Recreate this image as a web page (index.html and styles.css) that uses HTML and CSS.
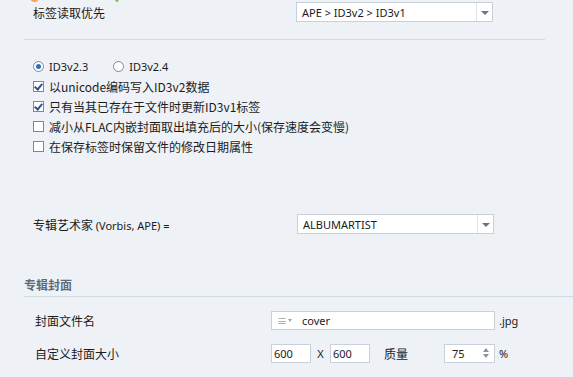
FILE: index.html
```html
<!DOCTYPE html>
<html lang="zh">
<head>
    <meta charset="UTF-8">
    <title>标签设置</title>
    <link rel="stylesheet" href="styles.css">
</head>
<body>
<div class="page">
    <div class="cut">
        <span class="dot orange"></span>
        <span class="dot green"></span>
    </div>

    <div class="row first">
        <span class="label">标签读取优先</span>
        <div class="combo"><span class="value">APE &gt; ID3v2 &gt; ID3v1</span><span class="arrow"></span></div>
    </div>

    <div class="sep"></div>

    <div class="options">
        <div class="radios">
            <span class="opt"><span class="radio on"></span>ID3v2.3</span>
            <span class="opt"><span class="radio"></span>ID3v2.4</span>
        </div>
        <div class="opt"><span class="check on"></span>以unicode编码写入ID3v2数据</div>
        <div class="opt"><span class="check on"></span>只有当其已存在于文件时更新ID3v1标签</div>
        <div class="opt"><span class="check"></span>减小从FLAC内嵌封面取出填充后的大小(保存速度会变慢)</div>
        <div class="opt"><span class="check"></span>在保存标签时保留文件的修改日期属性</div>
    </div>

    <div class="row artist">
        <span class="label">专辑艺术家 <span class="latin">(Vorbis, APE) =</span></span>
        <div class="combo"><span class="value">ALBUMARTIST</span><span class="arrow"></span></div>
    </div>

    <div class="section">专辑封面</div>

    <div class="row cover">
        <span class="label wide">封面文件名</span>
        <div class="input name"><span class="menu">≡<span class="tri"></span></span>cover</div>
        <span class="suffix">.jpg</span>
    </div>

    <div class="row cover">
        <span class="label wide">自定义封面大小</span>
        <div class="input small">600</div>
        <span class="x">X</span>
        <div class="input small">600</div>
        <span class="quality">质量</span>
        <div class="input spin">75<span class="spinner"><span class="up"></span><span class="down"></span></span></div>
        <span class="suffix">%</span>
    </div>
</div>
</body>
</html>
```

FILE: styles.css
```css
body {
    margin: 0;
    background: #eef1f6;
    font-family: "Noto Sans", "Noto Sans CJK SC", sans-serif;
    font-size: 12px;
    color: #1b1b1b;
}
.page {
    padding: 0 28px 0 24px;
    height: 377px;
    overflow: hidden;
}
.cut {
    height: 2px;
    position: relative;
    overflow: hidden;
}
.dot {
    position: absolute;
    top: -7px;
    width: 9px;
    height: 9px;
    border-radius: 50%;
}
.dot.orange {
    left: 6px;
    background: #f0a45a;
}
.dot.green {
    left: 91px;
    width: 4px;
    background: #7cbf5a;
}
.row {
    display: flex;
    align-items: center;
    padding-left: 9px;
}
.label {
    width: 263px;
    font-family: "Noto Sans CJK SC", sans-serif;
}
.latin {
    font-family: "Noto Sans", sans-serif;
    font-size: 11px;
}
.combo {
    width: 195px;
    height: 18px;
    background: #fff;
    border: 1px solid #c8d0d9;
    display: flex;
    align-items: center;
}
.combo .value {
    flex: 1;
    padding-left: 5px;
    font-size: 11px;
}
.combo .arrow {
    width: 15px;
    height: 18px;
    border-left: 1px solid #dde2e8;
    position: relative;
}
.combo .arrow::after {
    content: "";
    position: absolute;
    left: 4px;
    top: 8px;
    border-left: 4px solid transparent;
    border-right: 4px solid transparent;
    border-top: 4px solid #6b7480;
}
.sep {
    margin-top: 17px;
    width: 521px;
    height: 1px;
    background: #d3d9e0;
}
.options {
    margin-top: 16px;
    padding-left: 9px;
}
.radios {
    display: flex;
    gap: 25px;
    height: 20px;
    align-items: center;
}
.opt {
    display: flex;
    align-items: center;
    height: 20px;
    font-family: "Noto Sans CJK SC", sans-serif;
    font-size: 12px;
}
.radios .opt {
    font-family: "Noto Sans", sans-serif;
    font-size: 11px;
}
.radio {
    width: 9px;
    height: 9px;
    border: 1px solid #7d8895;
    border-radius: 50%;
    background: #fff;
    margin-right: 5px;
    position: relative;
}
.radio.on::after {
    content: "";
    position: absolute;
    left: 2px;
    top: 2px;
    width: 5px;
    height: 5px;
    border-radius: 50%;
    background: #2e6fb8;
}
.check {
    width: 9px;
    height: 9px;
    border: 1px solid #7d8895;
    background: #fff;
    margin-right: 5px;
    position: relative;
}
.check.on::after {
    content: "";
    position: absolute;
    left: 2px;
    top: 0;
    width: 3px;
    height: 6px;
    border-right: 2px solid #2a5597;
    border-bottom: 2px solid #2a5597;
    transform: rotate(40deg);
}
.artist {
    margin-top: 58px;
}
.artist .combo {
    margin-left: 1px;
}
.section {
    margin-top: 42px;
    padding-bottom: 3px;
    border-bottom: 1px solid #d3d9e0;
    font-family: "Noto Sans CJK SC", sans-serif;
    font-weight: bold;
    color: #5d6b7a;
    width: 549px;
}
.cover {
    padding-left: 11px;
    margin-top: 14px;
}
.cover + .cover {
    margin-top: 14px;
}
.wide {
    width: 236px;
}
.input {
    box-sizing: border-box;
    height: 19px;
    background: #fff;
    border: 1px solid #c8d0d9;
    display: flex;
    align-items: center;
    padding-left: 2px;
    font-size: 11px;
}
.name {
    width: 224px;
}
.menu {
    color: #9aa3ad;
    font-size: 10px;
    margin: 0 10px 0 3px;
    display: flex;
    align-items: center;
}
.tri {
    margin-left: 1px;
    border-left: 2px solid transparent;
    border-right: 2px solid transparent;
    border-top: 3px solid #9aa3ad;
}
.suffix {
    margin-left: 4px;
    font-size: 11px;
}
.small {
    width: 40px;
}
.x {
    width: 19px;
    text-align: center;
    font-size: 11px;
}
.quality {
    font-family: "Noto Sans CJK SC", sans-serif;
    margin-left: 14px;
    width: 60px;
}
.spin {
    width: 51px;
    padding-left: 7px;
    position: relative;
}
.spinner {
    position: absolute;
    right: 5px;
    top: 3px;
    display: flex;
    flex-direction: column;
    gap: 2px;
}
.up {
    border-left: 3px solid transparent;
    border-right: 3px solid transparent;
    border-bottom: 4px solid #8a939e;
}
.down {
    border-left: 3px solid transparent;
    border-right: 3px solid transparent;
    border-top: 4px solid #8a939e;
}
```
